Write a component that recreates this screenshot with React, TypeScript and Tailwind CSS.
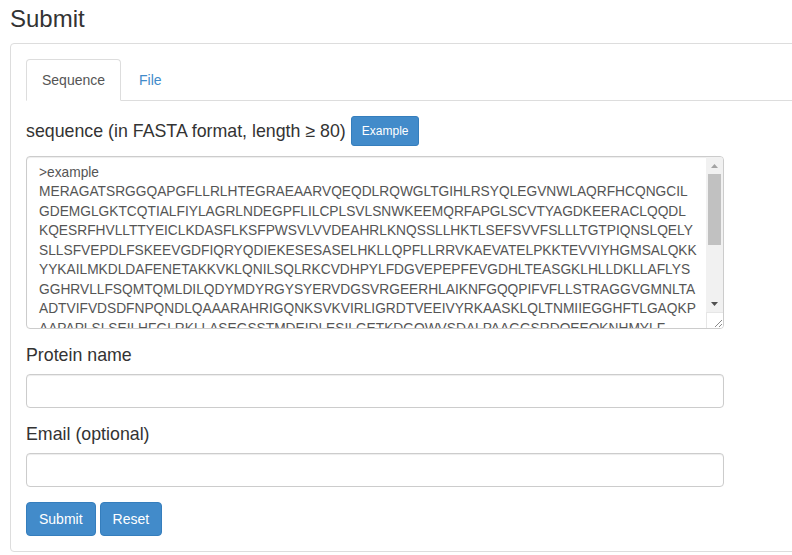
const sequenceLines = [
  ">example",
  "MERAGATSRGGQAPGFLLRLHTEGRAEAARVQEQDLRQWGLTGIHLRSYQLEGVNWLAQRFHCQNGCIL",
  "GDEMGLGKTCQTIALFIYLAGRLNDEGPFLILCPLSVLSNWKEEMQRFAPGLSCVTYAGDKEERACLQQDL",
  "KQESRFHVLLTTYEICLKDASFLKSFPWSVLVVDEAHRLKNQSSLLHKTLSEFSVVFSLLLTGTPIQNSLQELY",
  "SLLSFVEPDLFSKEEVGDFIQRYQDIEKESESASELHKLLQPFLLRRVKAEVATELPKKTEVVIYHGMSALQKK",
  "YYKAILMKDLDAFENETAKKVKLQNILSQLRKCVDHPYLFDGVEPEPFEVGDHLTEASGKLHLLDKLLAFLYS",
  "GGHRVLLFSQMTQMLDILQDYMDYRGYSYERVDGSVRGEERHLAIKNFGQQPIFVFLLSTRAGGVGMNLTA",
  "ADTVIFVDSDFNPQNDLQAAARAHRIGQNKSVKVIRLIGRDTVEEIVYRKAASKLQLTNMIIEGGHFTLGAQKP",
  "AAPAPLSLSEILHFGLRKLLASEGSSTMDEIDLESILGETKDGQWVSDALPAAGGSRDQEEQKNHMYLF",
];

function FakeScrollbar() {
  return (
    <div className="flex w-[17px] shrink-0 flex-col">
      <div className="flex flex-1 flex-col bg-[#f1f1f1]">
        <div className="flex h-[17px] items-center justify-center">
          <svg width="7" height="4" viewBox="0 0 7 4">
            <path d="M3.5 0 L7 4 L0 4 Z" fill="#a3a3a3" />
          </svg>
        </div>
        <div className="mx-[2px] h-[71px] bg-[#c1c1c1]" />
        <div className="flex-1" />
        <div className="flex h-[17px] items-center justify-center">
          <svg width="7" height="4" viewBox="0 0 7 4">
            <path d="M0 0 L7 0 L3.5 4 Z" fill="#505050" />
          </svg>
        </div>
      </div>
      <div className="flex h-[16px] items-end justify-end border-l border-t border-[#e6e6e6] bg-white pb-[1px] pr-[1px]">
        <svg width="8" height="8" viewBox="0 0 8 8">
          <path d="M8 1 L1 8 M8 5 L5 8" stroke="#8a8a8a" strokeWidth="1" />
        </svg>
      </div>
    </div>
  );
}

export default function App() {
  return (
    <div className="min-h-screen overflow-hidden bg-white font-['Liberation_Sans',Arial,sans-serif] text-[#333]">
      <div className="pl-[10px]">
        <h3 className="mb-[11px] pt-[6px] text-[24px] leading-[26px]">Submit</h3>
        <div className="w-[800px] rounded-[4px] border border-[#ddd] p-[15px]">
          <div className="flex border-b border-[#ddd]">
            <div className="-mb-px mr-[2px] rounded-t-[4px] border border-[#ddd] border-b-white bg-white px-[15px] py-[10px] text-[14px] leading-[20px] text-[#555]">
              Sequence
            </div>
            <div className="-mb-px mr-[2px] border border-transparent px-[15px] py-[10px] text-[14px] leading-[20px] text-[#428bca]">
              File
            </div>
          </div>

          <div className="w-[698px]">
            <div className="mt-[15px] flex items-center gap-[5px]">
              <span className="text-[17.8px] leading-[23px]">
                sequence (in FASTA format, length ≥ 80)
              </span>
              <button className="rounded-[3px] border border-[#357ebd] bg-[#428bca] px-[10px] py-[5px] text-[12px] leading-[18px] text-white">
                Example
              </button>
            </div>

            <div className="mt-[10px] flex h-[173px] overflow-hidden rounded-[4px] border border-[#ccc] shadow-[inset_0_1px_1px_rgba(0,0,0,0.075)]">
              <div className="min-w-0 flex-1 overflow-hidden px-[12px] pt-[6px] text-[13.75px] leading-[19.43px] text-[#555]">
                {sequenceLines.map((line, i) => (
                  <div key={i} className="whitespace-nowrap">
                    {line}
                  </div>
                ))}
              </div>
              <FakeScrollbar />
            </div>

            <div className="mb-[7px] mt-[15px] text-[17.8px] leading-[23px]">Protein name</div>
            <input
              type="text"
              className="block h-[34px] w-full rounded-[4px] border border-[#ccc] px-[12px] text-[14px] shadow-[inset_0_1px_1px_rgba(0,0,0,0.075)] outline-none"
            />

            <div className="mb-[7px] mt-[15px] text-[17.8px] leading-[23px]">Email (optional)</div>
            <input
              type="text"
              className="block h-[34px] w-full rounded-[4px] border border-[#ccc] px-[12px] text-[14px] shadow-[inset_0_1px_1px_rgba(0,0,0,0.075)] outline-none"
            />

            <div className="mt-[15px] flex gap-[4px]">
              <button className="rounded-[4px] border border-[#357ebd] bg-[#428bca] px-[12px] py-[6px] text-[14px] leading-[20px] text-white">
                Submit
              </button>
              <button className="rounded-[4px] border border-[#357ebd] bg-[#428bca] px-[12px] py-[6px] text-[14px] leading-[20px] text-white">
                Reset
              </button>
            </div>
          </div>
        </div>
      </div>
    </div>
  );
}
